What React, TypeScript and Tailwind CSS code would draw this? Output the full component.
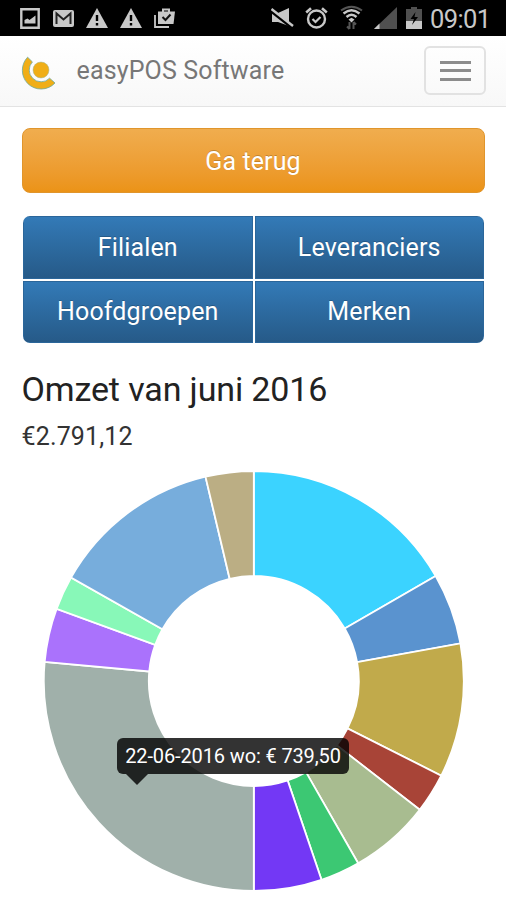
import type { ReactNode } from "react";

const CX = 253.8;
const CY = 210;
const OUTER = 210;
const INNER = 105;

// Slice boundaries in degrees, clockwise from twelve o'clock.
const slices = [
  { from: 0, to: 60, color: "#3bd3ff" },
  { from: 60, to: 79.7, color: "#5a93cf" },
  { from: 79.7, to: 116.8, color: "#c1aa4b" },
  { from: 116.8, to: 127.8, color: "#a84437" },
  { from: 127.8, to: 150.2, color: "#a8bc90" },
  { from: 150.2, to: 161.2, color: "#3cc873" },
  { from: 161.2, to: 180, color: "#7338f5" },
  { from: 180, to: 275.2, color: "#a0b0aa" },
  { from: 275.2, to: 290.1, color: "#aa72fc" },
  { from: 290.1, to: 299.5, color: "#88f8b8" },
  { from: 299.5, to: 346.7, color: "#77addc" },
  { from: 346.7, to: 360, color: "#bbae84" },
];

function point(radius: number, deg: number) {
  const a = (deg * Math.PI) / 180;
  return `${(CX + radius * Math.sin(a)).toFixed(2)} ${(CY - radius * Math.cos(a)).toFixed(2)}`;
}

function slicePath(from: number, to: number) {
  const large = to - from > 180 ? 1 : 0;
  return `M${point(OUTER, from)}A${OUTER} ${OUTER} 0 ${large} 1 ${point(OUTER, to)}L${point(INNER, to)}A${INNER} ${INNER} 0 ${large} 0 ${point(INNER, from)}Z`;
}

function Warning() {
  return (
    <svg width="22" height="20" viewBox="0 0 22 20" fill="#c8c8c8">
      <path d="M11 0 22 20H0Z" />
      <path d="M9.800 7h2.400v6H9.800zM9.800 15h2.400v2.500H9.800z" fill="#000" />
    </svg>
  );
}

function StatusBar() {
  return (
    <div className="flex h-[35.5px] items-center bg-black text-[#c8c8c8]">
      <div className="flex items-center pl-5 pt-[1px]">
        <svg width="20" height="21" viewBox="0 0 20 21" fill="none">
          <path d="M1.300 1.300h17.400v18.400H1.300z" stroke="#c8c8c8" strokeWidth="2.400" />
          <path d="M4.500 15.500v-3.500l3-1.500 2 1.500L15.500 7.500v8z" fill="#c8c8c8" />
        </svg>
        <svg className="ml-[13px]" width="21" height="17" viewBox="0 0 21 17">
          <rect width="21" height="17" rx="2" fill="#c8c8c8" />
          <path d="M3.500 14V3.500l7 6 7-6V14" fill="none" stroke="#222" strokeWidth="2" />
        </svg>
        <div className="ml-[12px] flex gap-[12px]">
          <Warning />
          <Warning />
        </div>
        <svg className="ml-[12px]" width="21" height="20" viewBox="0 0 21 20" fill="none">
          <path d="M1 7v12h14" stroke="#c8c8c8" strokeWidth="1.800" />
          <path d="M9 4V1.500h6V4" stroke="#c8c8c8" strokeWidth="2" />
          <path d="M4 3.500h17L19.500 16H4z" fill="#c8c8c8" />
          <path d="m8.500 9 3 3 5-5.500" stroke="#111" strokeWidth="2" />
        </svg>
      </div>
      <div className="ml-auto flex items-center pr-[15.5px]">
        <svg width="23" height="20" viewBox="0 0 23 20">
          <path d="M1 5h6l11-5v18L7 14H1z" fill="#c8c8c8" />
          <path d="M0 3 21.500 20" stroke="#000" strokeWidth="3" />
          <path d="M.500 1 22 18" stroke="#c8c8c8" strokeWidth="2.400" />
        </svg>
        <svg className="ml-[11px]" width="23" height="22" viewBox="0 0 23 22" fill="none" stroke="#c8c8c8">
          <circle cx="11.500" cy="12" r="8.500" strokeWidth="2.400" />
          <path d="M1.200 5.500 6 1.300M21.800 5.500 17 1.300" strokeWidth="2.600" />
          <path d="m7.500 12 3 3 5-5" strokeWidth="2.200" />
        </svg>
        <svg className="ml-[12px]" width="23" height="25" viewBox="0 0 23 25" fill="none" strokeWidth="2">
          <path d="M1 5.500Q11.500-2 22 5.500" stroke="#555" />
          <path d="M3.500 8.500Q11.500 2 19.500 8.500M6.500 12q5-4.500 10 0" stroke="#c8c8c8" strokeWidth="2.400" />
          <path d="m8.500 14.500 3-1.800 3 1.800-3 3z" fill="#c8c8c8" />
          <path d="M9.500 24v-7m-2.500 4.500 2.500 2.500m4 0v-7m0 0 2.500 2.500" stroke="#555" />
        </svg>
        <svg className="ml-[11px]" width="23" height="22" viewBox="0 0 23 22">
          <path d="M23 0v22H0z" fill="#505050" />
          <path d="M5.500 16.500V22H0z" fill="#c8c8c8" />
        </svg>
        <svg className="ml-[9px]" width="16" height="22" viewBox="0 0 16 22">
          <path d="M0 2h5V0h6v2h5v12H0z" fill="#505050" />
          <path d="M0 14h16v8H0z" fill="#c8c8c8" />
          <path d="m9.500 5-5 7h3.500L6 18l6-8H8.500z" fill="#000" />
        </svg>
        <span className="ml-[8px] mt-[3px] text-[25.5px] leading-none tracking-[-0.6px]">09:01</span>
      </div>
    </div>
  );
}

function Header() {
  return (
    <header className="flex h-[71.5px] items-center border-b border-[#e3e3e3] bg-linear-to-b from-white to-[#f8f8f8] pl-[21px] pr-[20px]">
      <svg className="mt-[6px]" width="35" height="35" viewBox="0 0 35 35">
        <path
          d="M6.600 1.200A19 19 0 0 0 6.600 27.400A19 19 0 0 0 34 27L28.600 22.200A11.800 11.800 0 0 1 11.700 22.300A11.800 11.800 0 0 1 11.400 5.900Z"
          fill="#f0ae16"
          stroke="#6da99b"
          strokeWidth=".800"
        />
        <circle cx="20" cy="14" r="8" fill="#f0ae16" stroke="#9db694" strokeWidth=".500" />
      </svg>
      <span className="ml-[20.5px] pt-[1px] text-[25px] leading-[30px] tracking-[0.15px] text-[#777]">easyPOS Software</span>
      <button aria-label="Menu" className="ml-auto flex h-[49px] w-[62px] flex-col items-center justify-center gap-[5.5px] rounded-[6px] border-2 border-[#e2e2e2]">
        <span className="h-[3px] w-[31px] bg-[#8c8c8c]" />
        <span className="h-[3px] w-[31px] bg-[#8c8c8c]" />
        <span className="h-[3px] w-[31px] bg-[#8c8c8c]" />
      </button>
    </header>
  );
}

function NavButton({ children }: { children: ReactNode }) {
  return (
    <button className="flex items-center justify-center border border-[#2b669a] bg-linear-to-b from-[#337ab7] to-[#265a88] text-[25px] tracking-[0.15px] text-white [text-shadow:0_-1px_0_rgba(0,0,0,0.2)]">
      {children}
    </button>
  );
}

export default function App() {
  return (
    <div className="h-[900px] w-[506px] overflow-hidden bg-white font-[Roboto,sans-serif]">
      <StatusBar />
      <Header />
      <main>
        <div className="px-[21.5px] pt-[21px]">
          <button className="flex h-[65px] w-full items-center justify-center rounded-[8px] border border-[#e0952c] bg-linear-to-b from-[#f0ad4e] to-[#eb9316] pt-[2px] text-[25px] tracking-[0.1px] text-white [text-shadow:0_-1px_0_rgba(0,0,0,0.2)]">
            Ga terug
          </button>
          <div className="ml-[1.5px] mr-[0.5px] mt-[23px] grid h-[127px] grid-cols-2 grid-rows-2 gap-[2px] overflow-hidden rounded-[7px]">
            <NavButton>Filialen</NavButton>
            <NavButton>Leveranciers</NavButton>
            <NavButton>Hoofdgroepen</NavButton>
            <NavButton>Merken</NavButton>
          </div>
          <h1 className="mt-[26px] text-[34px] leading-[40px] tracking-[-0.12px] text-[#222]">Omzet van juni 2016</h1>
          <p className="mt-[13px] text-[25px] leading-[30px] tracking-[0.15px] text-[#333]">€2.791,12</p>
        </div>
        <div className="relative mt-[19px]">
          <svg width="506" height="429" viewBox="0 0 506 429" className="block">
            {slices.map((s) => (
              <path key={s.from} d={slicePath(s.from, s.to)} fill={s.color} stroke="#fff" strokeWidth="1.800" />
            ))}
          </svg>
          <div className="absolute left-[117px] top-[267px] flex h-[36px] w-[232px] items-center justify-center rounded-[6px] bg-black/80 text-[20px] text-white">
            <span className="whitespace-nowrap tracking-[-0.13px]">22-06-2016 wo: € 739,50</span>
            <svg className="absolute left-[9px] top-full" width="22" height="11" viewBox="0 0 22 11">
              <path d="M0 0h22L11 11z" fill="#000" fillOpacity=".8" />
            </svg>
          </div>
        </div>
      </main>
    </div>
  );
}
